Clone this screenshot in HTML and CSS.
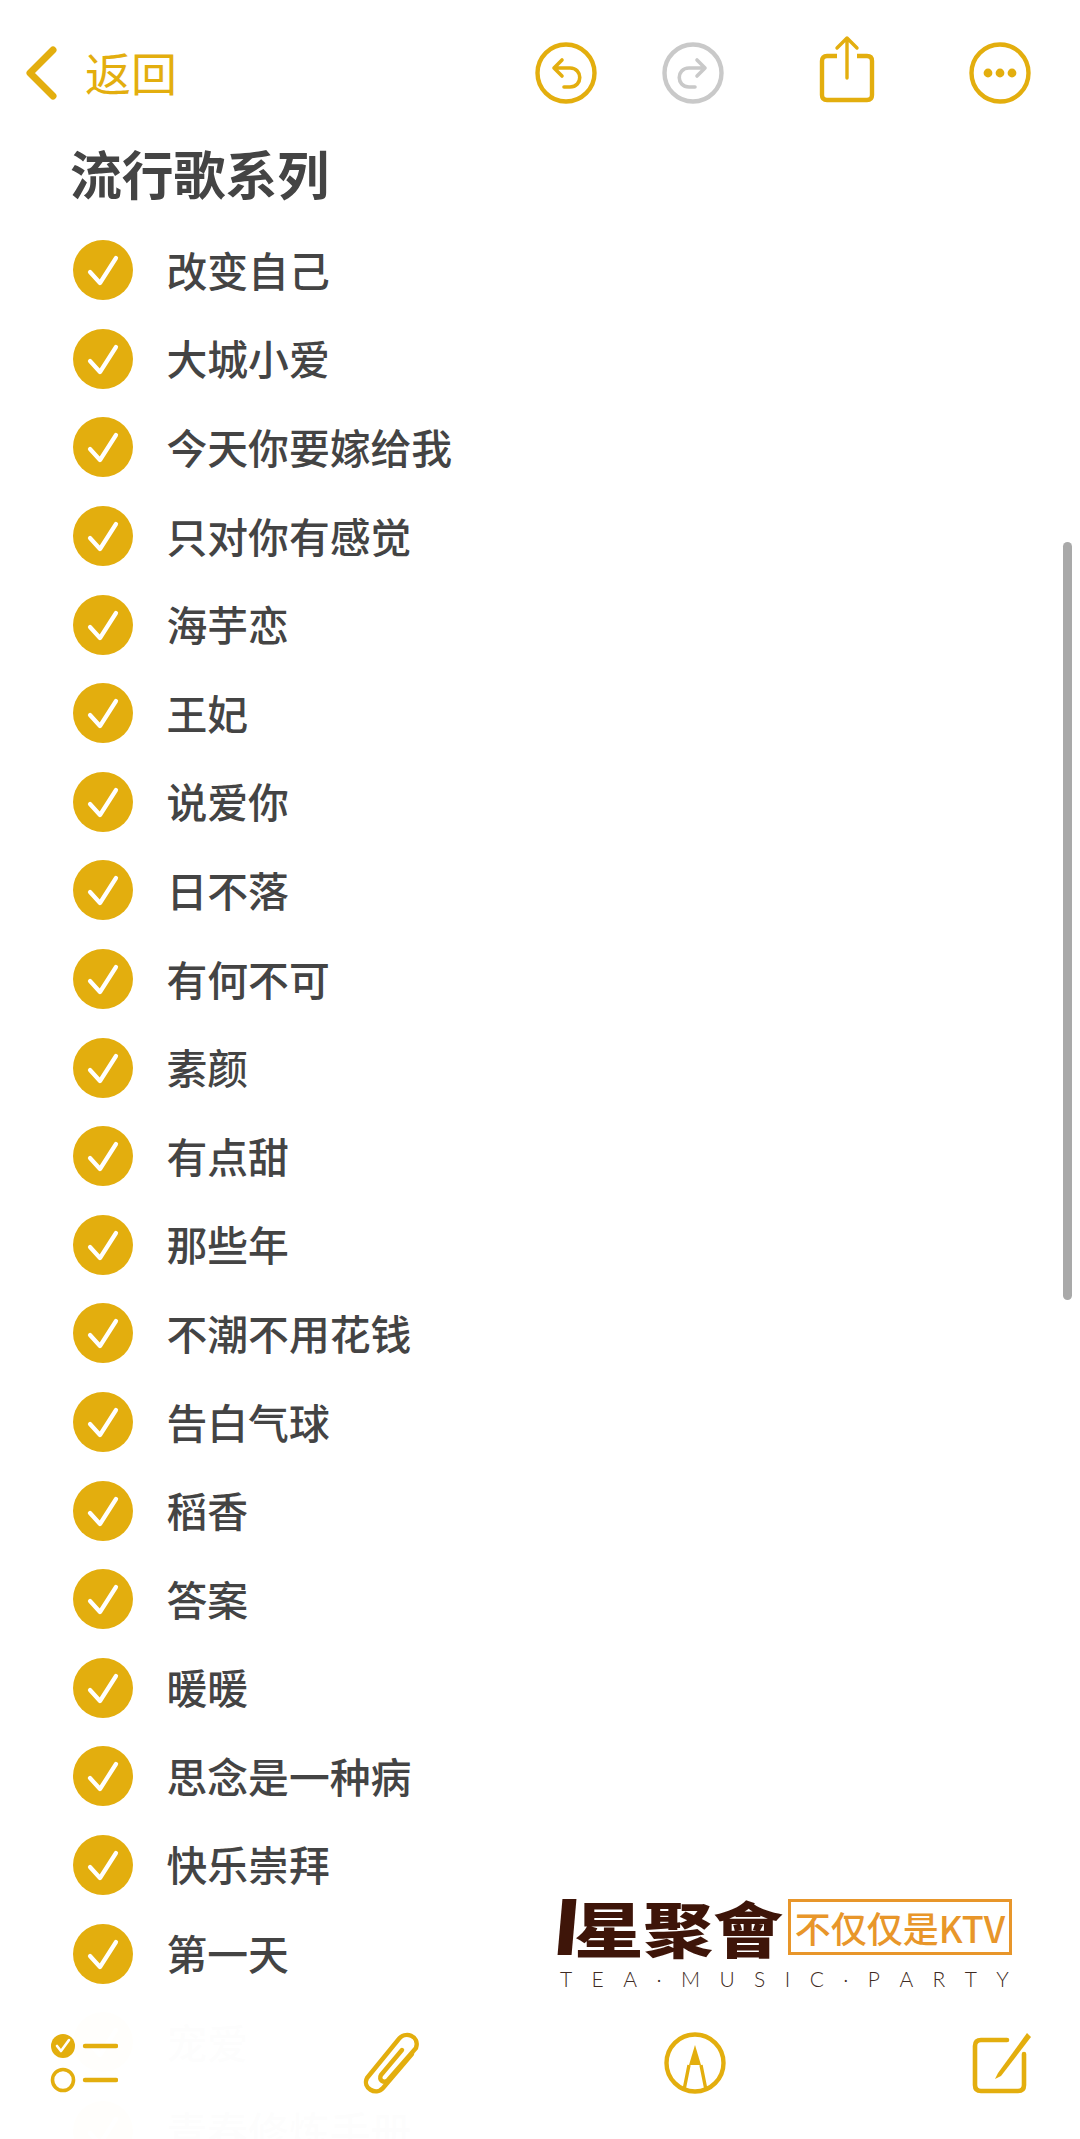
FILE: index.html
```html
<!DOCTYPE html>
<html lang="zh-CN">
<head>
    <meta charset="UTF-8" />
    <meta name="viewport" content="width=device-width, initial-scale=1.0" />
    <title>流行歌系列</title>
    <link rel="stylesheet" href="styles.css">
</head>
<body>
    <svg class="defs" width="0" height="0">
        <symbol id="tick" viewBox="0 0 60 60">
            <circle cx="30" cy="30" r="30" fill="#e3ae0e" />
            <path d="M17 32 L27 43 L43 18" fill="none" stroke="#fff" stroke-width="4.2" stroke-linecap="round" stroke-linejoin="round" />
        </symbol>
    </svg>

    <div class="page">
        <div class="navbar">
            <div class="back">
                <svg class="chevron" width="34" height="54" viewBox="0 0 34 54">
                    <path d="M29 4 L6 27 L29 50" fill="none" stroke="#e3ae0e" stroke-width="7" stroke-linecap="round" stroke-linejoin="round" />
                </svg>
                <span>返回</span>
            </div>
            <div class="nav-actions">
                <svg width="62" height="62" viewBox="0 0 62 62" class="undo">
                    <circle cx="31" cy="31" r="28.5" fill="none" stroke="#e3ae0e" stroke-width="4.4" />
                    <path d="M27 18 L19 26 L27 34 M19 26 H35 C48 26 48 45 35 45 H29" fill="none" stroke="#e3ae0e" stroke-width="3.6" stroke-linecap="round" stroke-linejoin="round" />
                </svg>
                <svg width="62" height="62" viewBox="0 0 62 62" class="redo">
                    <circle cx="31" cy="31" r="28.5" fill="none" stroke="#c9c9c9" stroke-width="4.4" />
                    <path d="M35 18 L43 26 L35 34 M43 26 H27 C14 26 14 45 27 45 H33" fill="none" stroke="#c9c9c9" stroke-width="3.6" stroke-linecap="round" stroke-linejoin="round" />
                </svg>
                <svg width="56" height="68" viewBox="0 0 56 68" class="share">
                    <path d="M18 21 H8 Q3 21 3 26 V60 Q3 65 8 65 H48 Q53 65 53 60 V26 Q53 21 48 21 H38" fill="none" stroke="#e3ae0e" stroke-width="4.4" />
                    <path d="M28 43 V3 M18 13 L28 3 L38 13" fill="none" stroke="#e3ae0e" stroke-width="3.4" stroke-linecap="round" stroke-linejoin="round" />
                </svg>
                <svg width="62" height="62" viewBox="0 0 62 62" class="more">
                    <circle cx="31" cy="31" r="28.5" fill="none" stroke="#e3ae0e" stroke-width="4.4" />
                    <circle cx="19" cy="31" r="4.4" fill="#e3ae0e" />
                    <circle cx="31" cy="31" r="4.4" fill="#e3ae0e" />
                    <circle cx="43" cy="31" r="4.4" fill="#e3ae0e" />
                </svg>
            </div>
        </div>

        <h1>流行歌系列</h1>

        <ul class="checklist">
            <li><svg width="60" height="60"><use href="#tick" /></svg><span>改变自己</span></li>
            <li><svg width="60" height="60"><use href="#tick" /></svg><span>大城小爱</span></li>
            <li><svg width="60" height="60"><use href="#tick" /></svg><span>今天你要嫁给我</span></li>
            <li><svg width="60" height="60"><use href="#tick" /></svg><span>只对你有感觉</span></li>
            <li><svg width="60" height="60"><use href="#tick" /></svg><span>海芋恋</span></li>
            <li><svg width="60" height="60"><use href="#tick" /></svg><span>王妃</span></li>
            <li><svg width="60" height="60"><use href="#tick" /></svg><span>说爱你</span></li>
            <li><svg width="60" height="60"><use href="#tick" /></svg><span>日不落</span></li>
            <li><svg width="60" height="60"><use href="#tick" /></svg><span>有何不可</span></li>
            <li><svg width="60" height="60"><use href="#tick" /></svg><span>素颜</span></li>
            <li><svg width="60" height="60"><use href="#tick" /></svg><span>有点甜</span></li>
            <li><svg width="60" height="60"><use href="#tick" /></svg><span>那些年</span></li>
            <li><svg width="60" height="60"><use href="#tick" /></svg><span>不潮不用花钱</span></li>
            <li><svg width="60" height="60"><use href="#tick" /></svg><span>告白气球</span></li>
            <li><svg width="60" height="60"><use href="#tick" /></svg><span>稻香</span></li>
            <li><svg width="60" height="60"><use href="#tick" /></svg><span>答案</span></li>
            <li><svg width="60" height="60"><use href="#tick" /></svg><span>暖暖</span></li>
            <li><svg width="60" height="60"><use href="#tick" /></svg><span>思念是一种病</span></li>
            <li><svg width="60" height="60"><use href="#tick" /></svg><span>快乐崇拜</span></li>
            <li><svg width="60" height="60"><use href="#tick" /></svg><span>第一天</span></li>
            <li><svg width="60" height="60"><use href="#tick" /></svg><span>宠爱</span></li>
            <li><svg width="60" height="60"><use href="#tick" /></svg><span>青春修炼手册</span></li>
        </ul>

        <div class="scrollbar"></div>

        <div class="watermark">
            <div class="logo-top">
                <span class="logo-bar"></span>
                <span class="logo-name">星聚會</span>
                <span class="logo-slogan">不仅仅是KTV</span>
            </div>
            <div class="logo-sub">
                <span>T</span><span>E</span><span>A</span><span>·</span><span>M</span><span>U</span><span>S</span><span>I</span><span>C</span><span>·</span><span>P</span><span>A</span><span>R</span><span>T</span><span>Y</span>
            </div>
        </div>

        <div class="toolbar">
            <svg width="68" height="62" viewBox="0 0 68 62">
                <circle cx="13" cy="14" r="12" fill="#e3ae0e" />
                <path d="M7 14 L11 19 L19 8" fill="none" stroke="#fff" stroke-width="2.6" stroke-linecap="round" stroke-linejoin="round" />
                <circle cx="13" cy="48" r="10.5" fill="none" stroke="#e3ae0e" stroke-width="3.6" />
                <path d="M35 14 H66 M35 48 H66" stroke="#e3ae0e" stroke-width="4.4" stroke-linecap="round" />
            </svg>
            <svg width="60" height="66" viewBox="0 0 60 66">
                <path d="M51 24 L22 58 C15 66 1 58 6 48 L37 10 C44 0 59 6 55 18 L27 50 C23 54 17 50 20 45 L41 20" fill="none" stroke="#e3ae0e" stroke-width="4.4" stroke-linecap="round" stroke-linejoin="round" />
            </svg>
            <svg class="tool-pen" width="62" height="62" viewBox="0 0 62 62">
                <circle cx="31" cy="31" r="28.5" fill="none" stroke="#e3ae0e" stroke-width="4.4" />
                <path d="M31 13 L37 33 H25 Z" fill="#e3ae0e" />
                <path d="M25 33 L20 58 M37 33 L42 58" fill="none" stroke="#e3ae0e" stroke-width="3.4" />
            </svg>
            <svg width="60" height="62" viewBox="0 0 60 62">
                <path d="M35 8 H9 Q3 8 3 14 V53 Q3 59 9 59 H46 Q52 59 52 53 V22" fill="none" stroke="#e3ae0e" stroke-width="4.6" stroke-linecap="round" />
                <path d="M55 1 L26 41 L23 47 L29 44 L59 5 Z" fill="#e3ae0e" />
            </svg>
        </div>
    </div>
</body>
</html>
```

FILE: styles.css
```css
* {
    margin: 0;
    padding: 0;
    box-sizing: border-box;
    font-family: "Noto Sans CJK SC", "Noto Sans", sans-serif;
}

body {
    background-color: #fff;
}

.defs {
    position: absolute;
}

.page {
    position: relative;
    width: 1080px;
    height: 2139px;
    overflow: hidden;
}

.navbar {
    display: flex;
    justify-content: space-between;
    align-items: center;
    height: 146px;
    padding: 0 49px 0 24px;
}

.back {
    display: flex;
    align-items: center;
    gap: 27px;
    color: #e3ae0e;
    font-size: 46px;
}

.back span {
    margin-bottom: 5px;
}

.nav-actions {
    display: flex;
    align-items: center;
}

.nav-actions svg {
    display: block;
}

.undo {
    margin-right: 65px;
}

.redo {
    margin-right: 95px;
}

.share {
    margin-top: -8px;
    margin-right: 94px;
}

h1 {
    height: 60px;
    margin-top: -3px;
    padding-left: 70px;
    color: #444;
    font-size: 51.8px;
    line-height: 60px;
    font-weight: 700;
}

.checklist {
    list-style: none;
    margin-top: 23px;
    padding-left: 73px;
}

.checklist li {
    display: flex;
    align-items: center;
    gap: 33.5px;
    height: 88.6px;
    color: #444;
    font-size: 40.8px;
    font-weight: 500;
}

.checklist svg {
    flex-shrink: 0;
}

.checklist span {
    margin-bottom: 2px;
}

.scrollbar {
    position: absolute;
    top: 542px;
    right: 8px;
    width: 9px;
    height: 758px;
    border-radius: 5px;
    background-color: #a9a9a9;
}

.watermark {
    position: absolute;
    top: 1899px;
    left: 560px;
    width: 452px;
}

.logo-top {
    display: flex;
    align-items: center;
    height: 56px;
}

.logo-bar {
    width: 14px;
    height: 56px;
    margin-right: 0;
    background-color: #3e1509;
    transform: skewX(-5deg);
}

.logo-name {
    width: 214px;
    color: #3e1509;
    font-size: 60px;
    line-height: 56px;
    font-weight: 900;
    white-space: nowrap;
    transform: scaleX(1.16);
    transform-origin: left center;
}

.logo-slogan {
    display: flex;
    align-items: center;
    justify-content: center;
    width: 224px;
    height: 56px;
    border: 3px solid #e8962a;
    color: #e8962a;
    font-size: 36px;
    line-height: 50px;
    font-weight: 500;
    white-space: nowrap;
}

.logo-sub {
    display: flex;
    justify-content: space-between;
    width: 449px;
    margin-top: 14px;
    color: #3e2a22;
    font-size: 21px;
    line-height: 20px;
}

.logo-sub span {
    font-family: "Lato", sans-serif;
    font-weight: 300;
}

.toolbar {
    position: absolute;
    left: 0;
    right: 0;
    bottom: 0;
    display: flex;
    justify-content: space-between;
    align-items: center;
    height: 134px;
    padding: 0 48px 18px 50px;
    background-color: rgba(255, 255, 255, 0.987);
}

.toolbar svg {
    display: block;
}

.tool-pen {
    margin-right: 3px;
}
```
